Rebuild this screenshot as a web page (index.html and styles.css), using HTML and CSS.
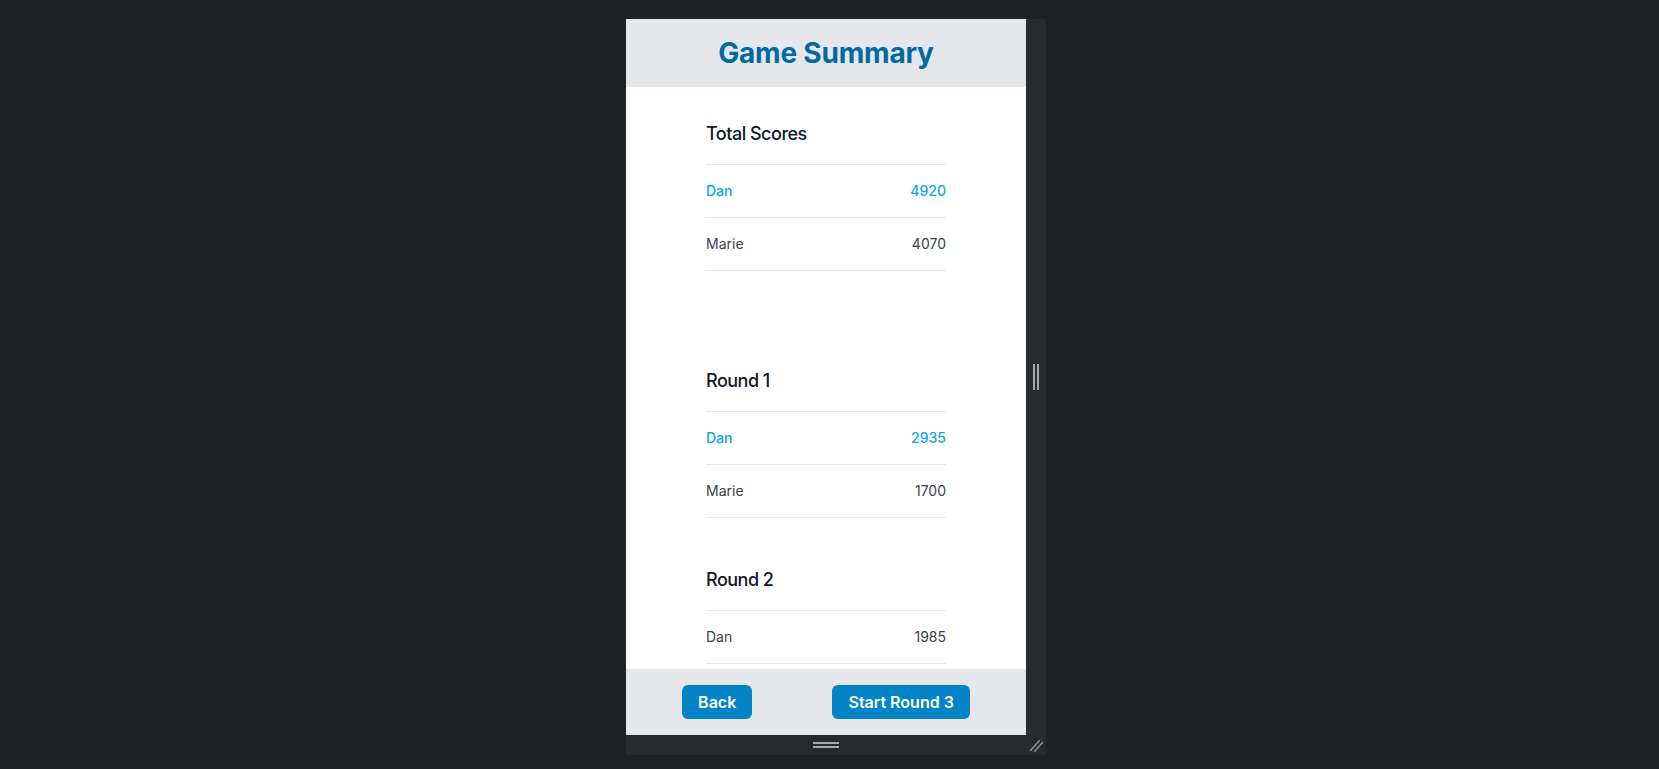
FILE: index.html
```html
<!DOCTYPE html>
<html lang="en">
<head>
<meta charset="utf-8">
<title>Game Summary</title>
<link rel="stylesheet" href="styles.css">
</head>
<body>
<div class="stage">
  <div class="device">
    <div class="screen">
      <header class="app-header">
        <h1 class="title">Game Summary</h1>
      </header>
      <main class="content">
        <section class="score-section total">
          <h2 class="section-title">Total Scores</h2>
          <ul class="score-list">
            <li class="score-row leader"><span>Dan</span><span>4920</span></li>
            <li class="score-row"><span>Marie</span><span>4070</span></li>
          </ul>
        </section>
        <section class="score-section">
          <h2 class="section-title">Round 1</h2>
          <ul class="score-list">
            <li class="score-row leader"><span>Dan</span><span>2935</span></li>
            <li class="score-row"><span>Marie</span><span>1700</span></li>
          </ul>
        </section>
        <section class="score-section">
          <h2 class="section-title">Round 2</h2>
          <ul class="score-list">
            <li class="score-row"><span>Dan</span><span>1985</span></li>
            <li class="score-row leader"><span>Marie</span><span>2370</span></li>
          </ul>
        </section>
      </main>
      <footer class="app-footer">
        <button class="btn">Back</button>
        <button class="btn">Start Round 3</button>
      </footer>
    </div>
    <div class="side-strip"><span class="vgrip"></span></div>
    <div class="bottom-strip"><span class="hgrip"></span></div>
    <div class="corner">
      <svg width="20" height="20" viewBox="0 0 20 20">
        <line x1="4.5" y1="15.5" x2="13.5" y2="5.5" stroke="#8a8c90" stroke-width="1.6" stroke-linecap="round"/>
        <line x1="8.5" y1="16.5" x2="16.5" y2="7.5" stroke="#8a8c90" stroke-width="1.6" stroke-linecap="round"/>
      </svg>
    </div>
  </div>
</div>
</body>
</html>
```

FILE: styles.css
```css
* { box-sizing: border-box; }

html, body {
  margin: 0;
  padding: 0;
  background: #202123;
  height: 100%;
  overflow: hidden;
  font-family: Inter, "Noto Sans", sans-serif;
}

.stage {
  padding: 19px 0 0 626px;
}

.device {
  display: grid;
  grid-template-columns: 400px 20px;
  grid-template-rows: 716px 20px;
  width: 420px;
}

.screen {
  display: flex;
  flex-direction: column;
  background: #ffffff;
  overflow: hidden;
}

.app-header {
  background: #e5e7eb;
  padding: 16px;
  text-align: center;
  flex: none;
}

.title {
  margin: 0;
  font-size: 28px;
  line-height: 36px;
  font-weight: 700;
  color: #0369a1;
  letter-spacing: -0.2px;
}

.content {
  flex: 1;
  overflow: hidden;
  padding: 33px 80px 0;
  display: flex;
  flex-direction: column;
  gap: 48px;
}

.score-section.total {
  margin-bottom: 48px;
}

.section-title {
  margin: 0 0 16px;
  font-size: 18px;
  line-height: 28px;
  font-weight: 500;
  color: #111827;
  letter-spacing: -0.5px;
}

.score-list {
  list-style: none;
  margin: 0;
  padding: 0;
  border-top: 1px solid #e5e7eb;
}

.score-row {
  display: flex;
  justify-content: space-between;
  padding: 16px 0;
  font-size: 14px;
  line-height: 20px;
  color: #374151;
  border-bottom: 1px solid #e5e7eb;
}

.score-row.leader {
  color: #0ea5e9;
  font-weight: 500;
}

.app-footer {
  flex: none;
  background: #e5e7eb;
  padding: 16px;
  display: flex;
  justify-content: space-around;
}

.btn {
  font-family: Inter, "Noto Sans", sans-serif;
  font-size: 16px;
  line-height: 24px;
  font-weight: 600;
  color: #ffffff;
  background: #0284c7;
  border: none;
  border-radius: 6px;
  padding: 5px 16px;
}

.side-strip {
  background: #292a2d;
  display: flex;
  align-items: center;
  justify-content: center;
}

.vgrip {
  width: 6px;
  height: 26px;
  border-left: 2px solid #a7a9ad;
  border-right: 2px solid #a7a9ad;
}

.bottom-strip {
  background: #292a2d;
  display: flex;
  align-items: center;
  justify-content: center;
}

.hgrip {
  width: 26px;
  height: 6px;
  border-top: 2px solid #a7a9ad;
  border-bottom: 2px solid #a7a9ad;
}

.corner {
  background: #292a2d;
}

.corner svg {
  display: block;
}
```
